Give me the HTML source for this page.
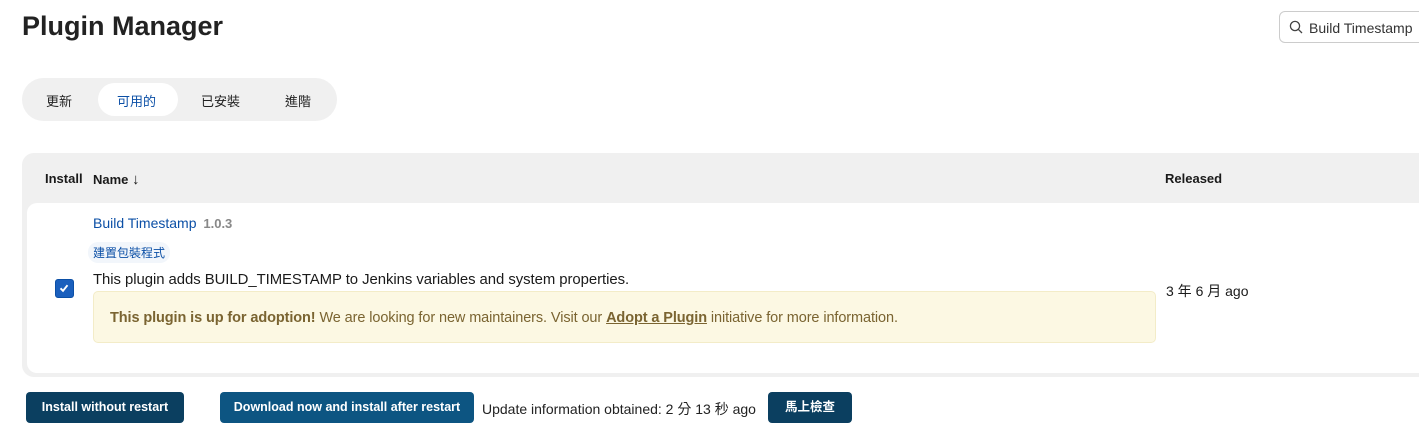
<!DOCTYPE html><html><head><meta charset="utf-8"><style>
body{margin:0;width:1419px;height:432px;background:#fff;font-family:"Liberation Sans","Noto Sans CJK TC",sans-serif;color:#1a1a1a;position:relative;overflow:hidden}
.a{position:absolute}
h1{position:absolute;left:22px;top:11px;margin:0;font-size:27px;font-weight:bold;color:#222}
.search{left:1279px;top:11px;width:160px;height:32px;border:1.5px solid #ccc;border-radius:6px;box-sizing:border-box}
.tabs{left:22px;top:78px;width:315px;height:43px;background:#f0f0f0;border-radius:22px}
.tab{position:absolute;top:13px;font-size:13px;color:#222}
.tabsel{left:76px;top:5px;width:80px;height:33px;background:#fff;border-radius:17px}
.tbl{left:22px;top:153px;width:1420px;height:224px;background:#f0f0f0;border-radius:12px}
.card{left:27px;top:203px;width:1420px;height:170px;background:#fff;border-radius:10px}
.th{font-size:13px;font-weight:bold;top:171px}
.btn{height:31px;top:392px;border-radius:4px;color:#fff;font-size:12.5px;font-weight:bold;text-align:center;line-height:31px}
</style></head><body>
<h1>Plugin Manager</h1>
<div class="a search"><svg class="a" style="left:9px;top:8px" width="14" height="14" viewBox="0 0 14 14"><circle cx="6" cy="6" r="4.6" fill="none" stroke="#444" stroke-width="1.3"/><path d="M9.4 9.4L13 13" stroke="#444" stroke-width="1.3"/></svg><span class="a" style="left:29px;top:8px;font-size:14px;color:#333;white-space:nowrap">Build Timestamp</span></div>
<div class="a tabs"><div class="a tabsel"></div>
<span class="tab" style="left:24px">更新</span><span class="tab" style="left:95px;color:#0b4fa6">可用的</span><span class="tab" style="left:179px">已安裝</span><span class="tab" style="left:263px">進階</span></div>
<div class="a tbl"></div><div class="a card"></div>
<span class="a th" style="left:45px">Install</span><span class="a th" style="left:93px">Name <span style="font-weight:normal;font-size:15px">↓</span></span><span class="a th" style="left:1165px">Released</span>
<span class="a" style="left:93px;top:215px;font-size:14px;color:#0b4fa6">Build Timestamp <span style="color:#888;font-size:13px;font-weight:bold;margin-left:3px">1.0.3</span></span>
<span class="a" style="left:88px;top:242px;padding:2px 5px;background:#f2f6fb;border-radius:10px;font-size:12px;color:#0b4fa6">建置包裝程式</span>
<div class="a" style="left:55px;top:279px;width:19px;height:19px;background:#1a5fbd;border-radius:3px;box-sizing:border-box;border:1.5px solid #0b4fa6"><svg class="a" style="left:2px;top:2px" width="12" height="12" viewBox="0 0 12 12"><path d="M2.5 6.3L5 8.8 9.5 3.2" fill="none" stroke="#fff" stroke-width="1.9"/></svg></div>
<span class="a" style="left:93px;top:272px;font-size:14.9px;letter-spacing:-0.05px">This plugin adds BUILD_TIMESTAMP to Jenkins variables and system properties.</span>
<div class="a" style="left:93px;top:291px;width:1063px;height:52px;background:#fcf8e3;border:1px solid #f3ecc8;border-radius:5px;box-sizing:border-box"></div>
<span class="a" style="left:110px;top:310px;font-size:14.5px;color:#7a6431;letter-spacing:-0.1px"><b>This plugin is up for adoption!</b> We are looking for new maintainers. Visit our <b style="text-decoration:underline">Adopt a Plugin</b> initiative for more information.</span>
<span class="a" style="left:1166px;top:281px;font-size:14px">3 年 6 月 ago</span>
<div class="a btn" style="left:26px;width:158px;background:#0b3f60">Install without restart</div>
<div class="a btn" style="left:220px;width:254px;background:#0d5582">Download now and install after restart</div>
<span class="a" style="left:482px;top:399px;font-size:14px;color:#222">Update information obtained: 2 分 13 秒 ago</span>
<div class="a btn" style="left:768px;width:84px;background:#0b3f60">馬上檢查</div>
</body></html>
